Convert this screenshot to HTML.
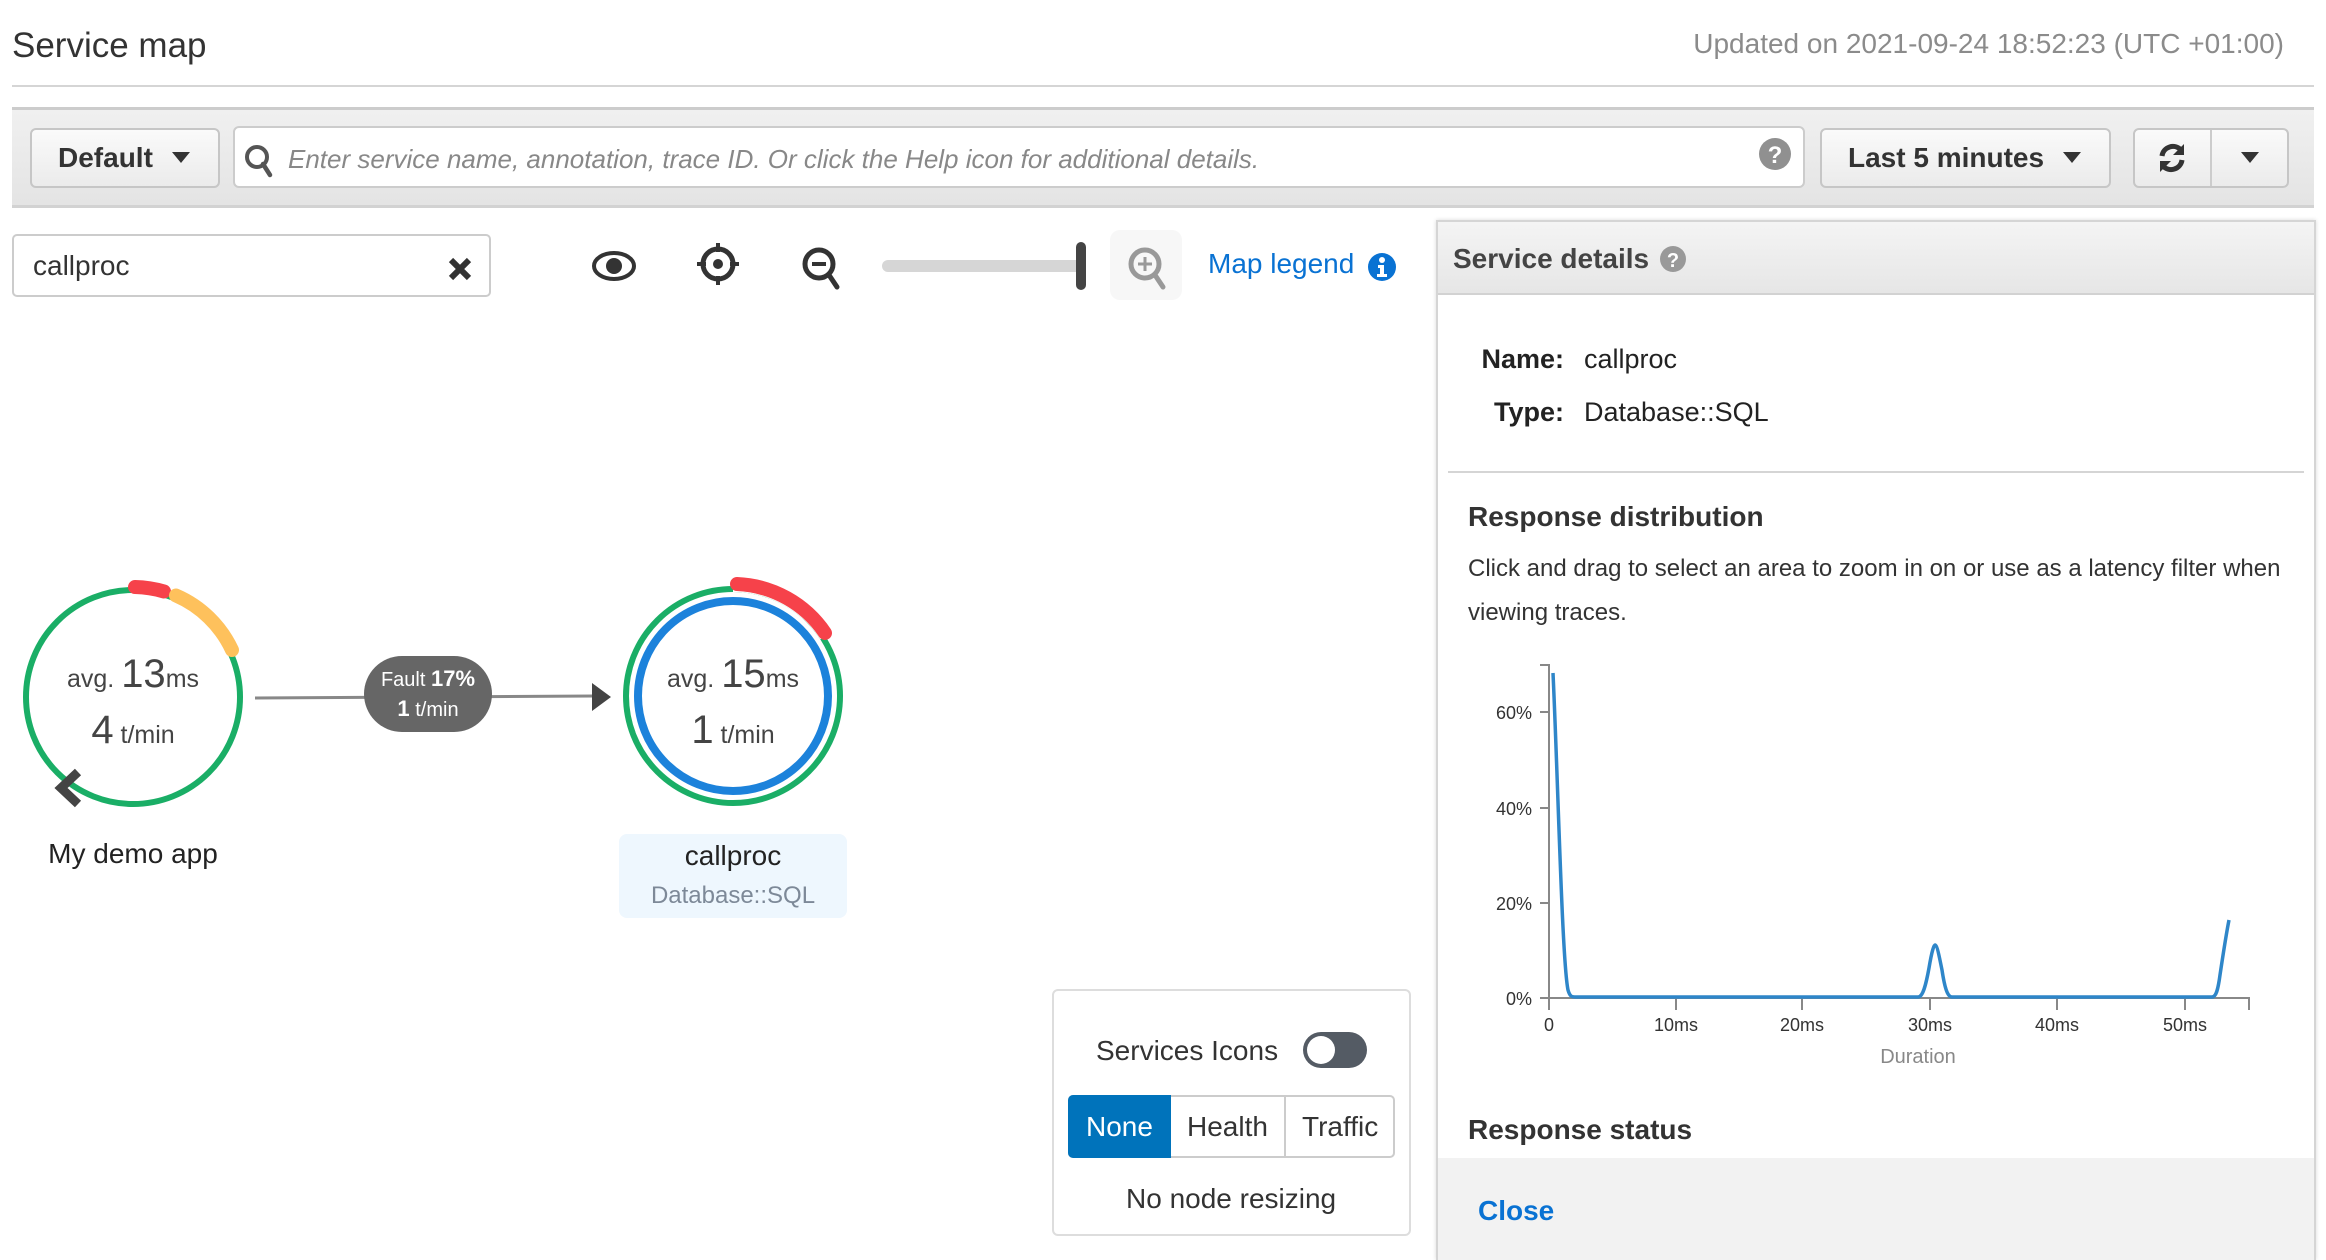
<!DOCTYPE html>
<html><head><meta charset="utf-8"><style>
*{box-sizing:border-box;margin:0;padding:0}
body{width:2326px;height:1260px;position:relative;background:#fff;font-family:"Liberation Sans",Arial,sans-serif;color:#444;overflow:hidden}
.a{position:absolute;white-space:nowrap}
.btn{position:absolute;border:2px solid #c6c6c6;border-radius:6px;background:linear-gradient(#fafafa,#ebebeb)}
</style></head><body>
<div class="a" style="left:12px;top:26px;font-size:35px;color:#333">Service map</div>
<div class="a" style="right:42px;top:28px;font-size:28px;color:#8b8b8b">Updated on 2021-09-24 18:52:23 (UTC +01:00)</div>
<div class="a" style="left:12px;top:85px;width:2302px;height:2px;background:#d5d5d5"></div>
<div class="a" style="left:12px;top:107px;width:2302px;height:101px;background:linear-gradient(#f0f0f0,#e4e4e4);border-top:3px solid #ccc;border-bottom:3px solid #d2d2d2"></div>
<div class="btn" style="left:30px;top:128px;width:190px;height:60px"></div>
<div class="a" style="left:58px;top:142px;font-size:28px;font-weight:bold;color:#333">Default</div>
<svg class="a" style="left:172px;top:152px" width="18" height="12"><path d="M0 0H18L9 11Z" fill="#333"/></svg>
<div class="a" style="left:233px;top:126px;width:1572px;height:62px;background:#fff;border:2px solid #ccc;border-radius:6px"></div>
<svg class="a" style="left:244px;top:144px" width="30" height="34"><circle cx="13" cy="13" r="10" fill="none" stroke="#555" stroke-width="4"/><path d="M19 20L26 31" stroke="#555" stroke-width="4.5" stroke-linecap="round"/></svg>
<div class="a" style="left:288px;top:144px;font-size:26px;font-style:italic;color:#888">Enter service name, annotation, trace ID. Or click the Help icon for additional details.</div>
<svg class="a" style="left:1759px;top:138px" width="32" height="32"><circle cx="16" cy="16" r="16" fill="#909090"/><text x="16" y="25" font-size="24" font-weight="bold" fill="#fff" text-anchor="middle" font-family="Liberation Sans">?</text></svg>
<div class="btn" style="left:1820px;top:128px;width:291px;height:60px"></div>
<div class="a" style="left:1848px;top:142px;font-size:28px;font-weight:bold;color:#333">Last 5 minutes</div>
<svg class="a" style="left:2063px;top:152px" width="18" height="12"><path d="M0 0H18L9 11Z" fill="#333"/></svg>
<div class="btn" style="left:2133px;top:128px;width:156px;height:60px"></div>
<div class="a" style="left:2210px;top:130px;width:2px;height:56px;background:#ccc"></div>
<svg class="a" style="left:2157px;top:142px" width="30" height="32"><path d="M5 14A11 11 0 0 1 24 8" fill="none" stroke="#333" stroke-width="5"/><path d="M27 2V13H16Z" fill="#333"/><path d="M25 18A11 11 0 0 1 6 24" fill="none" stroke="#333" stroke-width="5"/><path d="M3 30V19H14Z" fill="#333"/></svg>
<svg class="a" style="left:2241px;top:152px" width="18" height="12"><path d="M0 0H18L9 11Z" fill="#333"/></svg>

<div class="a" style="left:12px;top:234px;width:479px;height:63px;border:2px solid #ccc;border-radius:5px"></div>
<div class="a" style="left:33px;top:250px;font-size:28px;color:#333">callproc</div>
<svg class="a" style="left:448px;top:257px" width="24" height="24"><path d="M3 3L21 21M21 3L3 21" stroke="#333" stroke-width="6"/></svg>

<svg class="a" style="left:0;top:0" width="1430" height="1260">
<ellipse cx="614" cy="266" rx="20" ry="13" fill="none" stroke="#333" stroke-width="4"/><circle cx="614" cy="266" r="8" fill="#333"/>
<circle cx="718" cy="264" r="15" fill="none" stroke="#333" stroke-width="5"/><circle cx="718" cy="264" r="5" fill="#333"/>
<path d="M718 243v9M718 276v9M697 264h9M730 264h9" stroke="#333" stroke-width="4"/>
<circle cx="819" cy="264" r="14" fill="none" stroke="#333" stroke-width="5"/><path d="M812 264h14" stroke="#333" stroke-width="4"/><path d="M829 275l8 12" stroke="#333" stroke-width="5" stroke-linecap="round"/>
<path d="M888 266H1078" stroke="#d6d6d6" stroke-width="12" stroke-linecap="round"/>
<path d="M1081 247V285" stroke="#444" stroke-width="10" stroke-linecap="round"/>
<rect x="1110" y="230" width="72" height="70" rx="10" fill="#f7f7f7"/>
<circle cx="1145" cy="264" r="14" fill="none" stroke="#999" stroke-width="5"/><path d="M1138 264h14M1145 257v14" stroke="#999" stroke-width="3"/><path d="M1155 275l8 12" stroke="#999" stroke-width="5" stroke-linecap="round"/>
<circle cx="133" cy="697" r="107" fill="none" stroke="#1aae66" stroke-width="6"/>
<path d="M133 587A110 110 0 0 1 165 592" fill="none" stroke="#fff" stroke-width="16"/>
<path d="M179.5 597.3A110 110 0 0 1 231 647" fill="none" stroke="#fff" stroke-width="16"/>
<path d="M135 587A110 110 0 0 1 164 591.5" fill="none" stroke="#f6424a" stroke-width="14" stroke-linecap="round"/>
<path d="M176 595.5A110 110 0 0 1 232 650" fill="none" stroke="#fec15c" stroke-width="14" stroke-linecap="round"/>
<path d="M78 772L61 788L78 804" fill="none" stroke="#444" stroke-width="9"/>
<path d="M255 698L594 696" stroke="#888" stroke-width="3"/>
<path d="M592 683L611 697L592 711Z" fill="#444"/>
<rect x="364" y="656" width="128" height="76" rx="38" fill="#666"/>
<text x="428" y="686" font-family="Liberation Sans" font-size="20" fill="#fff" text-anchor="middle">Fault <tspan font-weight="bold" font-size="22">17%</tspan></text>
<text x="428" y="716" font-family="Liberation Sans" font-size="20" fill="#fff" text-anchor="middle"><tspan font-weight="bold" font-size="22">1</tspan> t/min</text>
<circle cx="733" cy="696" r="107" fill="none" stroke="#1aae66" stroke-width="6"/>
<circle cx="733" cy="696" r="95" fill="none" stroke="#1c82db" stroke-width="8"/>
<path d="M733 584A112 112 0 0 1 827 635" fill="none" stroke="#fff" stroke-width="16"/>
<path d="M737 584A112 112 0 0 1 825 633" fill="none" stroke="#f6424a" stroke-width="14" stroke-linecap="round"/>
</svg>
<div class="a" style="left:1208px;top:248px;font-size:28px;color:#0972d3">Map legend</div>
<svg class="a" style="left:1368px;top:253px" width="28" height="28"><circle cx="14" cy="14" r="14" fill="#0972d3"/><circle cx="14" cy="7" r="3" fill="#fff"/><path d="M10 12h6v9h3v3H9v-3h3v-6h-2z" fill="#fff"/></svg>

<div class="a" style="left:33px;width:200px;text-align:center;top:652px;font-size:25px;color:#444">avg. <span style="font-size:40px">13</span>ms</div>
<div class="a" style="left:33px;width:200px;text-align:center;top:708px;font-size:25px;color:#444"><span style="font-size:40px">4</span> t/min</div>
<div class="a" style="left:33px;width:200px;text-align:center;top:838px;font-size:28px;color:#222">My demo app</div>
<div class="a" style="left:633px;width:200px;text-align:center;top:652px;font-size:25px;color:#444">avg. <span style="font-size:40px">15</span>ms</div>
<div class="a" style="left:633px;width:200px;text-align:center;top:708px;font-size:25px;color:#444"><span style="font-size:40px">1</span> t/min</div>
<div class="a" style="left:619px;top:834px;width:228px;height:84px;background:#eef7fe;border-radius:8px"></div>
<div class="a" style="left:619px;top:840px;width:228px;text-align:center;font-size:28px;color:#222">callproc</div>
<div class="a" style="left:619px;top:882px;width:228px;text-align:center;font-size:24px;color:#7d8998">Database::SQL</div>

<div class="a" style="left:1052px;top:989px;width:359px;height:247px;border:2px solid #ddd;border-radius:6px"></div>
<div class="a" style="left:1096px;top:1035px;font-size:28px;color:#333">Services Icons</div>
<div class="a" style="left:1303px;top:1032px;width:64px;height:36px;border-radius:18px;background:#545b64"></div>
<div class="a" style="left:1307px;top:1036px;width:28px;height:28px;border-radius:14px;background:#fff"></div>
<div class="a" style="left:1068px;top:1095px;width:327px;height:63px;border:2px solid #ccc;border-radius:5px"></div>
<div class="a" style="left:1068px;top:1095px;width:103px;height:63px;background:#0073bb;border-radius:5px 0 0 5px"></div>
<div class="a" style="left:1284px;top:1097px;width:2px;height:59px;background:#ccc"></div>
<div class="a" style="left:1086px;top:1111px;font-size:28px;color:#fff">None</div>
<div class="a" style="left:1187px;top:1111px;font-size:28px;color:#333">Health</div>
<div class="a" style="left:1302px;top:1111px;font-size:28px;color:#333">Traffic</div>
<div class="a" style="left:1126px;top:1183px;font-size:28px;color:#333">No node resizing</div>

<div class="a" style="left:1436px;top:220px;width:880px;height:1040px;background:#fff;border:2px solid #d5d5d5;border-bottom:none;box-shadow:0 0 4px rgba(0,0,0,.15)"></div>
<div class="a" style="left:1438px;top:222px;width:876px;height:73px;background:linear-gradient(#f4f4f4,#e6e6e6);border-bottom:2px solid #d2d2d2"></div>
<div class="a" style="left:1453px;top:243px;font-size:28px;font-weight:bold;color:#444">Service details</div>
<svg class="a" style="left:1660px;top:246px" width="26" height="26"><circle cx="13" cy="13" r="13" fill="#999"/><text x="13" y="21" font-size="20" font-weight="bold" fill="#fff" text-anchor="middle" font-family="Liberation Sans">?</text></svg>
<div class="a" style="left:1400px;width:164px;text-align:right;top:344px;font-size:27px;font-weight:bold;color:#222">Name:</div>
<div class="a" style="left:1584px;top:344px;font-size:27px;color:#222">callproc</div>
<div class="a" style="left:1400px;width:164px;text-align:right;top:397px;font-size:27px;font-weight:bold;color:#222">Type:</div>
<div class="a" style="left:1584px;top:397px;font-size:27px;color:#222">Database::SQL</div>
<div class="a" style="left:1448px;top:471px;width:856px;height:2px;background:#d5d5d5"></div>
<div class="a" style="left:1468px;top:501px;font-size:28px;font-weight:bold;color:#333">Response distribution</div>
<div class="a" style="left:1468px;top:547px;font-size:24px;line-height:44px;color:#333">Click and drag to select an area to zoom in on or use as a latency filter when<br>viewing traces.</div>

<svg class="a" style="left:1438px;top:640px" width="876" height="460">
<g transform="translate(-1438,-640)" font-family="Liberation Sans" font-size="18" fill="#333">
<path d="M1540 665H1549V998H2249V1010M1540 712H1549M1540 808H1549M1540 903H1549M1540 998H1549M1549 998V1010M1676 998V1010M1802 998V1010M1930 998V1010M2057 998V1010M2185 998V1010" fill="none" stroke="#888" stroke-width="2"/>
<text x="1532" y="719" text-anchor="end">60%</text><text x="1532" y="815" text-anchor="end">40%</text><text x="1532" y="910" text-anchor="end">20%</text><text x="1532" y="1005" text-anchor="end">0%</text>
<text x="1549" y="1031" text-anchor="middle">0</text><text x="1676" y="1031" text-anchor="middle">10ms</text><text x="1802" y="1031" text-anchor="middle">20ms</text><text x="1930" y="1031" text-anchor="middle">30ms</text><text x="2057" y="1031" text-anchor="middle">40ms</text><text x="2185" y="1031" text-anchor="middle">50ms</text>
<text x="1918" y="1063" text-anchor="middle" font-size="20" fill="#888">Duration</text>
<path d="M1553 673C1558 780 1562 960 1568 990C1570 997 1572 997 1576 997H1918C1922 997 1925 990 1929 968C1932 950 1934 945 1935 945C1937 945 1939 955 1942 970C1945 990 1948 997 1952 997H2212C2216 997 2218 990 2220 975C2223 955 2226 935 2229 920" fill="none" stroke="#2e86c9" stroke-width="3.5"/>
</g>
</svg>

<div class="a" style="left:1468px;top:1114px;font-size:28px;font-weight:bold;color:#333">Response status</div>
<div class="a" style="left:1438px;top:1158px;width:876px;height:102px;background:#f2f2f2"></div>
<div class="a" style="left:1478px;top:1195px;font-size:28px;font-weight:bold;color:#0972d3">Close</div>
</body></html>
